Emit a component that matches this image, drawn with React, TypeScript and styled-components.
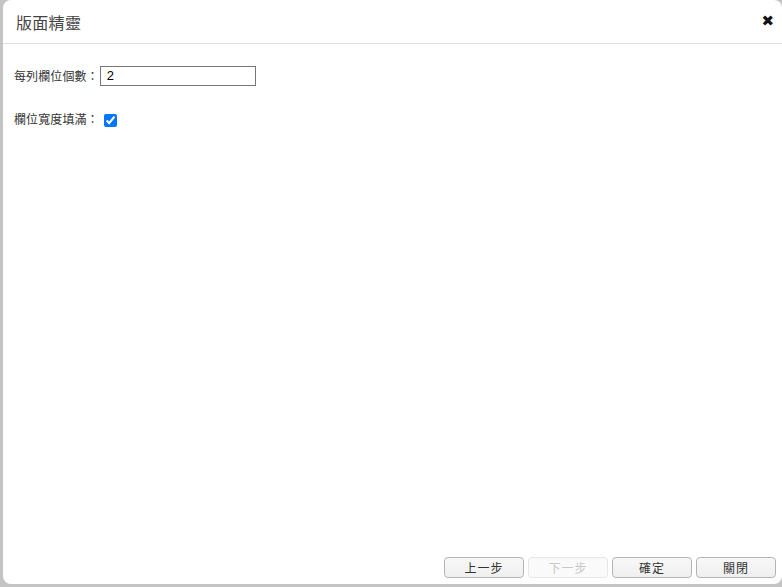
import React from "react";
import styled, { createGlobalStyle } from "styled-components";

const Global = createGlobalStyle`
  html, body { margin: 0; padding: 0; }
  body {
    background: #c4c4c4;
    font-family: "Microsoft JhengHei", "Noto Sans CJK TC", "Liberation Sans", sans-serif;
    width: 782px; height: 587px; overflow: hidden;
  }
`;

const Page = styled.div`
  width: 782px;
  height: 587px;
  padding: 0 0 3px 3px;
  box-sizing: border-box;
  display: flex;
`;

const Dialog = styled.div`
  flex: 1;
  background: #fff;
  border-radius: 8px;
  display: flex;
  flex-direction: column;
  overflow: hidden;
`;

const Header = styled.div`
  height: 44px;
  border-bottom: 1px solid #dddddd;
  display: flex;
  align-items: center;
  justify-content: space-between;
  padding: 0 8px 0 13px;
  box-sizing: border-box;
  flex-shrink: 0;
`;

const Title = styled.div`
  font-size: 16px;
  color: #444;
  padding-top: 1px;
  letter-spacing: 0.3px;
`;

const Close = styled.div`
  font-size: 15px;
  font-weight: bold;
  color: #111;
  font-family: "DejaVu Sans", sans-serif;
  line-height: 1;
`;

const Body = styled.div`
  flex: 1;
  padding: 21px 11px;
  display: flex;
  flex-direction: column;
  gap: 12px;
`;

const Row = styled.div`
  display: flex;
  align-items: center;
  height: 21px;
`;

const RowTall = styled(Row)`
  height: 29px;
  align-items: flex-end;
`;

const Label = styled.span`
  font-size: 12px;
  color: #333;
  letter-spacing: 0.1px;
`;

const TextInput = styled.input`
  width: 156px;
  height: 20px;
  box-sizing: border-box;
  border: 1px solid #767676;
  padding: 0 6px;
  font-size: 13px;
  font-family: "Liberation Sans", sans-serif;
  color: #000;
  outline: none;
  margin: 0 0 0 1px;
`;

const Check = styled.input`
  width: 13px;
  height: 13px;
  margin: 0 0 0 5px;
  accent-color: #0075ff;
`;

const Footer = styled.div`
  height: 27px;
  display: flex;
  justify-content: flex-end;
  align-items: flex-start;
  gap: 4px;
  padding-right: 6px;
  flex-shrink: 0;
`;

const Btn = styled.button<{ $disabled?: boolean }>`
  width: 80px;
  height: 21px;
  box-sizing: border-box;
  border-radius: 4px;
  border: 1px solid ${p => (p.$disabled ? "#e6e6e6" : "#b3b3b3")};
  background: ${p => (p.$disabled ? "#fafafa" : "linear-gradient(#f8f8f8, #efefef)")};
  color: ${p => (p.$disabled ? "#c8c8c8" : "#333")};
  font-size: 12px;
  font-family: inherit;
  padding: 0;
  letter-spacing: 1px;
`;

export default function App() {
  return (
    <>
      <Global />
      <Page>
        <Dialog>
          <Header>
            <Title>版面精靈</Title>
            <Close>✖</Close>
          </Header>
          <Body>
            <Row>
              <Label>每列欄位個數：</Label>
              <TextInput defaultValue="2" />
            </Row>
            <RowTall>
              <Label>欄位寬度填滿：</Label>
              <Check type="checkbox" defaultChecked />
            </RowTall>
          </Body>
          <Footer>
            <Btn>上一步</Btn>
            <Btn $disabled>下一步</Btn>
            <Btn>確定</Btn>
            <Btn>關閉</Btn>
          </Footer>
        </Dialog>
      </Page>
    </>
  );
}
